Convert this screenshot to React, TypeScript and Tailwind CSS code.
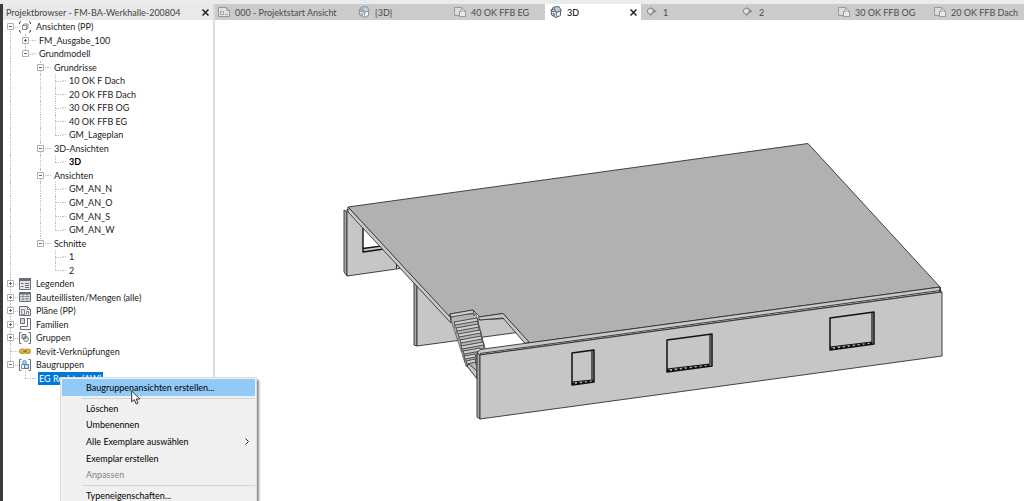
import type {ReactNode} from "react";

type Node = {
    label: string;
    icon?: ReactNode;
    collapsed?: boolean;
    bold?: boolean;
    selected?: boolean;
    children?: Node[];
}

type Row = {
    node: Node;
    depth: number;
    first: boolean;
    // one flag per level: does the guide line go on below this row
    more: boolean[];
}

type IconProps = {
    children: ReactNode;
}

function Icon({children}: IconProps) {
    return (
        <svg viewBox="0 0 12 12" fill="none" stroke="#6a6f77" className="size-3 shrink-0" aria-hidden="true">
            {children}
        </svg>
    );
}

const ViewsIcon = () => (
    <Icon>
        <path d="M.5 3V1.500L2 .5M10 .5l1.500 1V3M.5 9v1.500l1.500 1M10 11.500l1.500-1V9" stroke="#444"/>
        <path d="M3.500 4.500h4v4h-4zM3.500 4.500l1.500-1.500h4v4l-1.500 1.500" strokeWidth=".8"/>
    </Icon>
);

const LegendIcon = () => (
    <Icon>
        <path d="M.5.5h11v11H.5z" fill="#e4e6ea"/>
        <path d="M0 1.500h12" strokeWidth="3"/>
        <path d="M2 5.500h2.500M2 8.500h2.500M6 5.500h4M6 7.500h4M6 9.500h4"/>
    </Icon>
);

const ScheduleIcon = () => (
    <Icon>
        <path d="M.5 1.500h11v9H.5z" fill="#e4e6ea"/>
        <path d="M0 2.500h12" strokeWidth="2"/>
        <path d="M1 5.500h10M1 8h10M4 3v8M8 3v8" strokeOpacity=".6"/>
    </Icon>
);

const SheetIcon = () => (
    <Icon>
        <path d="M.5 10.500v-9h8l3 3v6z" fill="#e8eaed"/>
        <path d="M8.500 1.500v3h3M2.500 9.500v-5h3v5zM7.500 9.500v-3h2v3" strokeWidth=".8"/>
    </Icon>
);

const FamilyIcon = () => (
    <Icon>
        <path d="M1.500.5h4v5h-4z" fill="#d3d7dd"/>
        <path d="M7.500.5h4v11h-10v-3h7v-8"/>
    </Icon>
);

const GroupIcon = () => (
    <Icon>
        <path d="M2.500.5h-2v11h2M9.500.5h2v11h-2"/>
        <path d="M3 2.500h4v4H3z" fill="#d3d7dd"/>
        <circle cx="7" cy="7" r="2.400"/>
    </Icon>
);

const LinkIcon = () => (
    <Icon>
        <rect x=".8" y="4.200" width="5" height="4" rx="2" stroke="#c99a35" strokeWidth="1.600" fill="#e8bb55"/>
        <rect x="6.200" y="4.200" width="5" height="4" rx="2" stroke="#c99a35" strokeWidth="1.600" fill="#e8bb55"/>
        <path d="M4 6.200h4" stroke="#8a6212"/>
    </Icon>
);

const AssemblyIcon = () => (
    <Icon>
        <path d="M2.500.5h-2v11h2M9.500.5h2v11h-2"/>
        <path d="M2.500 5.500h3v4h-3z" fill="#fff" strokeWidth=".8"/>
        <circle cx="5.500" cy="3.500" r="2" stroke="#5f97c4" fill="#a9d2f2"/>
        <path d="M5.500 5.500h4v4h-4z" stroke="#4a7fab" fill="#c3dff4"/>
    </Icon>
);

const StartTabIcon = () => (
    <Icon>
        <g stroke="#92979d">
            <path d="M.5 10.500v-9h8l3 3v6z" fill="#dfe1e4"/>
            <path d="M8.500 1.500v3h3M2.500 8.500v-3h3v3zM7 8.500h3" strokeWidth=".8"/>
        </g>
    </Icon>
);

const HouseTabIcon = ({active}: {active?: boolean}) => (
    <Icon>
        <g stroke={active ? "#59636f" : "#8d949b"} strokeLinejoin="round">
            <path d="M1.500 5.500v3.500L6 11.500l4.500-2V5z" fill="#f1f3f5"/>
            <path d="M.6 5 3.500 1l5.500-.4L11.500 4.500 6.500 6.500 4 3z" fill="#c3ced8"/>
            <path d="M3.500 1 6.500 6.500v4.500M3 7v2l1.500.8V7.800z" strokeWidth=".7" fill="#9bb4c8"/>
        </g>
    </Icon>
);

const PlanTabIcon = () => (
    <Icon>
        <g stroke="#979ca2">
            <path d="M.5 1.500h7.500v8H.5z" fill="#d9dcdf"/>
            <path d="M5.500 5.500h6v5h-6z" fill="#e8eaec"/>
            <path d="M6.500 5.500V4l2-1.500 2 1.500v1.500" fill="#d9dcdf"/>
        </g>
    </Icon>
);

const SectionTabIcon = () => (
    <Icon>
        <path d="M4.500 1 10.500 5.200l-6 4.300z" fill="#85898e" stroke="none"/>
        <circle cx="4.300" cy="5.200" r="3" fill="#dcdee0" stroke="#85898e"/>
        <path d="M4.300 8.500v2" stroke="#85898e"/>
    </Icon>
);

const leaves = (...labels: string[]): Node[] => labels.map((label) => ({label}));

const tree: Node[] = [
    {
        label: "Ansichten (PP)",
        icon: <ViewsIcon/>,
        children: [
            {label: "FM_Ausgabe_100", collapsed: true},
            {
                label: "Grundmodell",
                children: [
                    {
                        label: "Grundrisse",
                        children: leaves("10 OK F Dach", "20 OK FFB Dach", "30 OK FFB OG", "40 OK FFB EG", "GM_Lageplan"),
                    },
                    {label: "3D-Ansichten", children: [{label: "3D", bold: true}]},
                    {label: "Ansichten", children: leaves("GM_AN_N", "GM_AN_O", "GM_AN_S", "GM_AN_W")},
                    {label: "Schnitte", children: leaves("1", "2")},
                ],
            },
        ],
    },
    {label: "Legenden", icon: <LegendIcon/>, collapsed: true},
    {label: "Bauteillisten/Mengen (alle)", icon: <ScheduleIcon/>, collapsed: true},
    {label: "Pläne (PP)", icon: <SheetIcon/>, collapsed: true},
    {label: "Familien", icon: <FamilyIcon/>, collapsed: true},
    {label: "Gruppen", icon: <GroupIcon/>, collapsed: true},
    {label: "Revit-Verknüpfungen", icon: <LinkIcon/>},
    {
        label: "Baugruppen",
        icon: <AssemblyIcon/>,
        children: [{label: "EG Rechts (AW)", selected: true}],
    },
];

function flatten(nodes: Node[], parents: boolean[] = []): Row[] {
    return nodes.flatMap((node, i) => {
        const more = [...parents, i < nodes.length - 1];
        return [
            {node, depth: parents.length, first: parents.length === 0 && i === 0, more},
            ...flatten(node.children ?? [], more),
        ];
    });
}

function Toggle({collapsed, label}: {collapsed?: boolean; label: string}) {
    return (
        <button aria-label={label} aria-expanded={!collapsed} className="z-10 col-start-1 row-start-1 block size-[7px] place-self-center bg-white">
            <svg viewBox="0 0 7 7" className="size-[7px]" fill="none">
                <path d="M.5.5h6v6h-6z" stroke="#b0b0b0"/>
                <path d={collapsed ? "M2 3.500h3M3.500 2v3" : "M2 3.500h3"} stroke="#4c68a0"/>
            </svg>
        </button>
    );
}

function TreeRow({node, depth, first, more}: Row) {
    const last = more[depth];
    return (
        <li className="flex min-h-0 items-center">
            {more.map((goesOn, i) => (
                <span key={i} className="grid h-full w-[15px] shrink-0 grid-cols-1 grid-rows-1">
                    {i < depth && goesOn && (
                        <span className="col-start-1 row-start-1 ml-[7px] border-l border-dotted border-[#bdbdbd]"/>
                    )}
                    {i === depth && (
                        <>
                            <span className="col-start-1 row-start-1 ml-[7px] grid grid-rows-2">
                                <span className={first ? "" : "border-l border-dotted border-[#bdbdbd]"}/>
                                <span className={`border-t border-dotted border-t-[#bdbdbd] ${last ? "border-l border-l-[#bdbdbd]" : ""}`}/>
                            </span>
                            {(node.children || node.collapsed) && <Toggle collapsed={node.collapsed} label={node.label}/>}
                        </>
                    )}
                </span>
            ))}
            {node.icon ? (
                <span className="mr-1 ml-px">{node.icon}</span>
            ) : (
                <span className="mr-0.5 w-[3px] border-t border-dotted border-[#bdbdbd]"/>
            )}
            <span
                className={`px-px leading-[13px] whitespace-nowrap ${node.bold ? "font-bold text-black" : ""} ${node.selected ? "bg-[#0078d7] text-white" : ""}`}>
                {node.label}
            </span>
        </li>
    );
}

function Close({label}: {label: string}) {
    return (
        <button aria-label={label} className="ml-auto shrink-0">
            <svg viewBox="0 0 7 7" className="size-[7px]" stroke="#222" strokeWidth="1.500">
                <path d="m.5.5 6 6m0-6-6 6"/>
            </svg>
        </button>
    );
}

const tabs = [
    {label: "000 - Projektstart Ansicht", icon: <StartTabIcon/>, wide: true},
    {label: "{3D}", icon: <HouseTabIcon/>},
    {label: "40 OK FFB EG", icon: <PlanTabIcon/>},
    {label: "3D", icon: <HouseTabIcon active/>, active: true},
    {label: "1", icon: <SectionTabIcon/>},
    {label: "2", icon: <SectionTabIcon/>},
    {label: "30 OK FFB OG", icon: <PlanTabIcon/>},
    {label: "20 OK FFB Dach", icon: <PlanTabIcon/>},
];

function Tabs() {
    return (
        <nav className="flex h-4 overflow-hidden bg-[#cbcbcb] text-[#4c4c4c]">
            {tabs.map((tab) => (
                <div
                    key={tab.label}
                    className={`flex shrink-0 items-center pr-1 ${tab.wide ? "w-[138px] pl-[3px]" : "w-24 pl-[5px]"} ${tab.active ? "bg-white text-black" : ""}`}>
                    <button className="flex items-center gap-[5px] whitespace-nowrap">
                        {tab.icon}
                        <span>{tab.label}</span>
                    </button>
                    {tab.active && <Close label="Ansicht schließen"/>}
                </div>
            ))}
        </nav>
    );
}

// left x, right x, top left y, top right y, bottom left y, bottom right y
const windows = [
    [572, 594, 353, 350, 385, 382],
    [667, 712, 340, 334, 372, 366],
    [830, 874, 318, 312, 350, 344],
];

// left and right end of every tread, from the top step down
const steps = [
    [450, 314, 473, 310],
    [454, 322, 477, 318],
    [456, 328, 478, 324],
    [458, 334, 480, 330],
    [460, 340, 481, 336],
    [461, 346, 483, 342],
    [463, 351, 480, 348],
    [464, 356, 475, 354],
    [466, 361, 475, 359],
];

function Building() {
    return (
        <svg
            viewBox="215 20 809 481"
            preserveAspectRatio="xMinYMin meet"
            className="min-h-0 w-full flex-1"
            fill="none"
            stroke="#303030"
            strokeWidth=".9"
            strokeLinejoin="round"
            role="img"
            aria-label="3D-Ansicht der Werkhalle">
            {/* rear walls */}
            <path d="M344 210 347 212V276L344 272z" fill="#a9a9a9"/>
            <path d="M347 209 400 265V268.500L347 276z" fill="#c6c6c6"/>
            <path d="M363 227 384 247 363 249z" fill="#fff" stroke="none"/>
            <path d="M363 227V252L384 249M363 248.500 382 246" stroke="#111" strokeWidth="1.400"/>
            <path d="M396.500 262.500V268.500" stroke="#111"/>
            <path d="M414 281 417 284V346L414 345z" fill="#a9a9a9"/>
            <path d="M417 284 452 321 517 318V332.500L417 346z" fill="#c6c6c6"/>

            {/* roof slab with the stair opening */}
            <path
                d="M348 207 808 143.500 940 287 529 343 503 313.500 480 317 473 310 450 314V318z"
                fill="#b1b1b1"/>
            <path d="M348 207 451 318V323L348 212z" fill="#cacaca"/>
            <path d="M478 317 503 313.500 529 342 525 343.500 503 318 480 320z" fill="#c6c6c6"/>

            {/* stairs */}
            <path d="M451 320 466 366 477 373V350L485 348 476 314 450 314z" fill="#b5b5b5" strokeWidth=".6"/>
            {steps.map(([x1, y1, x2, y2]) => (
                <g key={y1} strokeWidth=".8">
                    <path d={`M${x1} ${y1}L${x2} ${y2}l1 3L${x1 + 1} ${y1 + 3}z`} fill="#cfcfcf"/>
                    <path d={`M${x1 + 1} ${y1 + 3}v3M${x2 + 1} ${y2 + 3}v3`}/>
                </g>
            ))}
            <path d="M467 366 469 364 477 371V379z" fill="#c6c6c6"/>

            {/* front wall */}
            <path d="M477 353 480 349.500 940 287 941 292 480 355z" fill="#cacaca"/>
            <path d="M480 353.500 940 290.500"/>
            <path d="M477 353 480 355V419L477 417z" fill="#a9a9a9"/>
            <path d="M480 355 942 292V356L480 419z" fill="#c6c6c6"/>
            <path d="M940 287V292" stroke="#000"/>

            {windows.map(([l, r, tl, tr, bl, br]) => (
                <g key={l} stroke="#111">
                    <path d={`M${l} ${tl}L${r} ${tr}V${br}L${l} ${bl}z`} strokeWidth="1.500"/>
                    <path d={`M${r - 2} ${tr}V${br - 2}L${l} ${bl - 3}`} strokeWidth="1.200"/>
                    <path d={`M${l} ${bl - 1}L${r} ${br - 1}`} strokeWidth="2.500" strokeDasharray="3 2"/>
                </g>
            ))}
        </svg>
    );
}

const menuItems = [
    {label: "Löschen"},
    {label: "Umbenennen"},
    {label: "Alle Exemplare auswählen", submenu: true},
    {label: "Exemplar erstellen"},
    {label: "Anpassen", disabled: true},
];

function ContextMenu() {
    return (
        <div
            role="menu"
            className="absolute top-[377px] left-[60px] z-20 w-[197px] border border-[#dcdcdc] bg-[#f0f0f0] p-px text-black shadow-[2px_3px_2px_#8c8c8c]">
            <button role="menuitem" className="flex h-[17px] w-full items-center bg-[#91c9f7] pl-6">
                Baugruppenansichten erstellen...
            </button>
            <hr className="mt-0.5 mb-px ml-5 border-[#d4d4d4]"/>
            <div className="grid h-[83px] auto-rows-fr">
                {menuItems.map((item) => (
                    <button
                        key={item.label}
                        role="menuitem"
                        disabled={item.disabled}
                        className="flex min-h-0 items-center justify-between pr-1.5 pl-6 disabled:text-[#858585]">
                        {item.label}
                        {item.submenu && (
                            <svg viewBox="0 0 4 7" className="h-[7px] w-1" fill="none" stroke="#222">
                                <path d="m.5.5 3 3-3 3"/>
                            </svg>
                        )}
                    </button>
                ))}
            </div>
            <hr className="mt-0.5 mb-px ml-5 border-[#d4d4d4]"/>
            <button role="menuitem" className="flex h-[17px] w-full items-center pl-6">
                Typeneigenschaften...
            </button>
        </div>
    );
}

export default function App() {
    return (
        <div
            className="relative flex h-screen flex-col overflow-hidden bg-white font-['Lato',sans-serif] text-[9px] leading-[13px] text-[#222]">
            <div className="h-1 shrink-0 bg-[#ebebeb]"/>
            <div className="flex min-h-0 flex-1">
                <aside className="w-[215px] shrink-0 border-r-2 border-l-[3px] border-r-[#dcdcdc] border-l-[#3a3a3a]">
                    <header className="flex h-4 items-center bg-[#e9e9e9] pr-1 pl-[3px] whitespace-nowrap text-[#444]">
                        <h1>Projektbrowser - FM-BA-Werkhalle-200804</h1>
                        <Close label="Projektbrowser schließen"/>
                    </header>
                    <ul className="grid h-[365px] auto-rows-fr">
                        {flatten(tree).map((row, i) => (
                            <TreeRow key={i} {...row}/>
                        ))}
                    </ul>
                </aside>
                <main className="flex min-w-0 flex-1 flex-col">
                    <Tabs/>
                    <Building/>
                </main>
            </div>

            <ContextMenu/>
            <svg viewBox="0 0 10 15" className="absolute top-[390px] left-[131px] z-30 h-[15px] w-2.5" fill="#fff" stroke="#333">
                <path d="M.7.9v11l2.600-2.300 1.800 4.300 1.900-.8-1.800-4.100h3.600z"/>
            </svg>
        </div>
    );
}
